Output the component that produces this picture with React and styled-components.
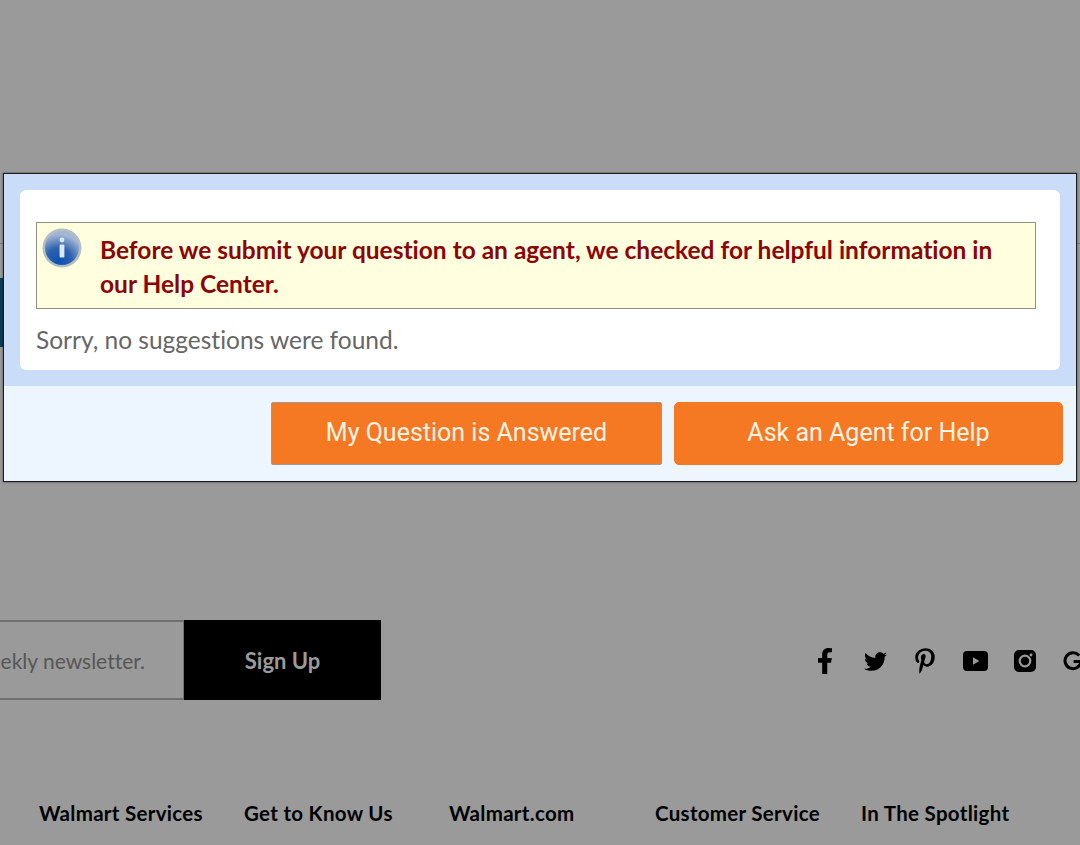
import React from "react"
import styled, { createGlobalStyle } from "styled-components"
import { FaFacebookF, FaTwitter, FaPinterestP } from "react-icons/fa"

const GlobalStyle = createGlobalStyle`
  html, body {
    margin: 0;
    padding: 0;
    background: #9a9a9a;
  }
  * {
    box-sizing: border-box;
  }
`

const Page = styled.div`
  position: relative;
  width: 1080px;
  height: 845px;
  overflow: hidden;
  background: #9a9a9a;
  font-family: Lato, "Liberation Sans", sans-serif;
  font-variant-ligatures: none;
  padding-top: 243px;
`

const HeaderRule = styled.div`
  height: 1px;
  background: #7c7c7c;
`

const Banner = styled.div`
  width: 600px;
  height: 69px;
  margin-top: 34px;
  background: #103a55;
`

const NewsletterRow = styled.div`
  display: flex;
  align-items: center;
  justify-content: space-between;
  height: 80px;
  margin-top: 273px;
`

const Newsletter = styled.form`
  display: flex;
  height: 80px;
  margin: 0;
`

const EmailBox = styled.div`
  width: 184px;
  height: 80px;
  display: flex;
  align-items: center;
  justify-content: flex-end;
  padding-right: 38px;
  border: 2px solid #707070;
  border-left: 0;
  border-right-width: 1px;
  font-size: 21px;
  color: #565656;
  white-space: nowrap;
  overflow: hidden;
`

const SignUp = styled.button`
  width: 197px;
  height: 80px;
  border: 0;
  background: #000;
  color: #9a9a9a;
  font-family: inherit;
  font-variant-ligatures: none;
  font-size: 22px;
  font-weight: 700;
`

const Socials = styled.div`
  display: flex;
  align-items: center;
  width: 280px;
  height: 30px;
  flex: none;
  margin-top: 2px;
`

const SocialSlot = styled.span`
  width: 50px;
  flex: none;
  display: flex;
  justify-content: center;
  color: #000;
  font-size: ${(p) => p.$size || 24}px;
`

const Columns = styled.div`
  display: grid;
  grid-template-columns: 205px 205px 206px 206px 1fr;
  margin-top: 101px;
  padding-left: 39px;
`

const ColumnTitle = styled.div`
  font-size: 20.5px;
  font-weight: 700;
  letter-spacing: 0.3px;
  color: #000;
  line-height: 24px;
  white-space: nowrap;
`

const Dialog = styled.div`
  position: absolute;
  left: 3px;
  top: 173px;
  width: 1074px;
  height: 309px;
  display: flex;
  flex-direction: column;
  border: 1px solid #1c1c1c;
  box-shadow: 0 0 2px rgba(0, 0, 0, 0.55);
  background: #c9ddf8;
`

const DialogBody = styled.div`
  height: 212px;
  padding: 16px 16px 16px 16px;
`

const Card = styled.div`
  height: 180px;
  padding: 32px 24px 0 16px;
  border-radius: 6px;
  background: #fff;
`

const Notice = styled.div`
  display: flex;
  height: 87px;
  border: 1px solid #8f8f86;
  background: #ffffdf;
  padding: 5px 20px 0 5px;
`

const InfoBadge = styled.svg`
  width: 40px;
  height: 40px;
  flex: none;
`

const NoticeText = styled.div`
  margin-left: 18px;
  padding-top: 5px;
  font-size: 24.5px;
  line-height: 34px;
  font-weight: 700;
  color: #8b0505;
`

const Empty = styled.p`
  margin: 15px 0 0;
  font-size: 24.5px;
  line-height: 32px;
  color: #666;
`

const DialogFooter = styled.div`
  flex: 1;
  display: flex;
  justify-content: flex-end;
  align-items: flex-start;
  gap: 12px;
  padding: 16px 13px 0 0;
  background: #edf5fe;
`

const ActionButton = styled.button`
  height: 63px;
  width: ${(p) => p.$width}px;
  padding: 0 0 3px;
  border: 1px solid ${(p) => (p.$focused ? "#9a9a9a" : "#f57823")};
  border-radius: ${(p) => (p.$focused ? 2 : 5)}px;
  background: #f57823;
  color: #fff3e6;
  font-family: Roboto, "Liberation Sans", sans-serif;
  font-size: 25px;
`

const YoutubeIcon = () => (
  <svg width="25" height="20" viewBox="0 0 25 20">
    <path
      fillRule="evenodd"
      fill="currentColor"
      d="M4 0h17a4 4 0 0 1 4 4v12a4 4 0 0 1-4 4H4a4 4 0 0 1-4-4V4a4 4 0 0 1 4-4zM10 6.2v7.6l6.4-3.8z"
    />
  </svg>
)

const InstagramIcon = () => (
  <svg width="22" height="22" viewBox="0 0 22 22">
    <path
      fillRule="evenodd"
      fill="currentColor"
      d="M5 0h12a5 5 0 0 1 5 5v12a5 5 0 0 1-5 5H5a5 5 0 0 1-5-5V5a5 5 0 0 1 5-5zM11 4.6a6.4 6.4 0 1 0 0 12.8a6.4 6.4 0 0 0 0-12.8zM11 6.8a4.2 4.2 0 1 1 0 8.4a4.2 4.2 0 0 1 0-8.4z"
    />
    <circle cx="17" cy="5" r="1.4" fill="#9a9a9a" />
  </svg>
)

const GoogleIcon = () => (
  <svg width="24" height="20" viewBox="0 0 24 20">
    <path
      d="M16.2 4.6A8 8 0 1 0 18 10.6H10.6"
      fill="none"
      stroke="currentColor"
      strokeWidth="3"
    />
  </svg>
)

const InfoIcon = () => (
  <InfoBadge viewBox="0 0 40 40">
    <defs>
      <radialGradient id="infoFill" cx="40%" cy="90%" r="80%">
        <stop offset="0%" stopColor="#0b4fb4" />
        <stop offset="50%" stopColor="#2d62ad" />
        <stop offset="100%" stopColor="#a3b6d4" />
      </radialGradient>
    </defs>
    <circle cx="20" cy="20" r="19.5" fill="#b4bcc4" />
    <circle cx="20" cy="20" r="17" fill="url(#infoFill)" />
    <circle cx="20" cy="12" r="2.4" fill="#dfe7f2" />
    <rect x="17.6" y="16.5" width="4.8" height="13" rx="1" fill="#dfe7f2" />
  </InfoBadge>
)

const columnTitles = [
  "Walmart Services",
  "Get to Know Us",
  "Walmart.com",
  "Customer Service",
  "In The Spotlight",
]

const App = () => (
  <Page>
    <GlobalStyle />
    <HeaderRule />
    <Banner />

    <NewsletterRow>
      <Newsletter>
        <EmailBox>our weekly newsletter.</EmailBox>
        <SignUp type="button">Sign Up</SignUp>
      </Newsletter>
      <Socials>
        <SocialSlot $size={26}><FaFacebookF /></SocialSlot>
        <SocialSlot $size={23}><FaTwitter /></SocialSlot>
        <SocialSlot $size={26}><FaPinterestP /></SocialSlot>
        <SocialSlot><YoutubeIcon /></SocialSlot>
        <SocialSlot><InstagramIcon /></SocialSlot>
        <SocialSlot><GoogleIcon /></SocialSlot>
      </Socials>
    </NewsletterRow>

    <Columns>
      {columnTitles.map((title) => (
        <ColumnTitle key={title}>{title}</ColumnTitle>
      ))}
    </Columns>

    <Dialog>
      <DialogBody>
        <Card>
          <Notice>
            <InfoIcon />
            <NoticeText>
              Before we submit your question to an agent, we checked for helpful
              information in our Help Center.
            </NoticeText>
          </Notice>
          <Empty>Sorry, no suggestions were found.</Empty>
        </Card>
      </DialogBody>
      <DialogFooter>
        <ActionButton $width={391} $focused>My Question is Answered</ActionButton>
        <ActionButton $width={389}>Ask an Agent for Help</ActionButton>
      </DialogFooter>
    </Dialog>
  </Page>
)

export default App
